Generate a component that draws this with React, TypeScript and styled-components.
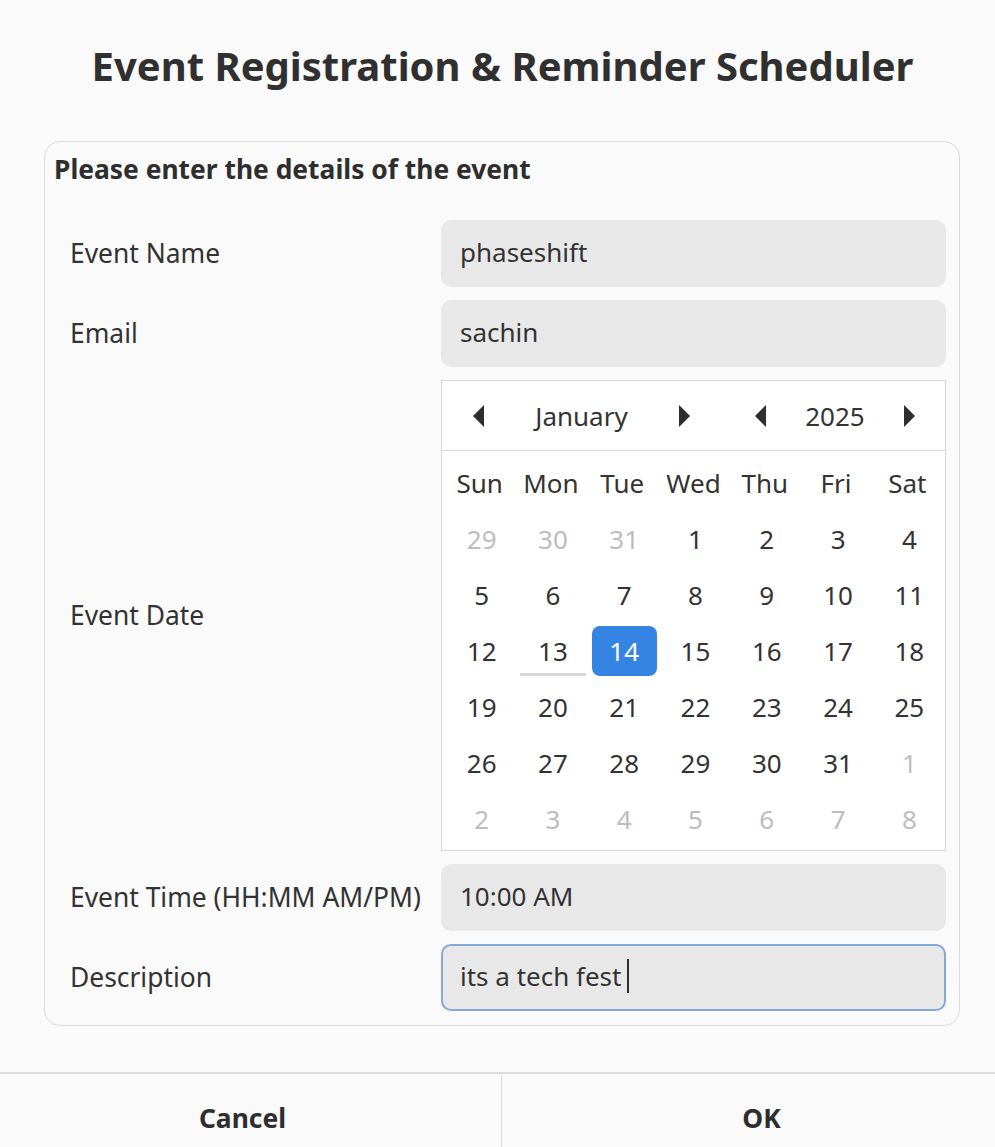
import * as React from 'react';
import styled, { createGlobalStyle } from 'styled-components';

const GlobalStyle = createGlobalStyle`
  html, body {
    margin: 0;
    padding: 0;
    background: #fafafa;
  }
  body {
    font-family: 'Noto Sans', 'Open Sans', sans-serif;
    color: #2e2e2e;
  }
`;

const Dialog = styled.div`
  width: 995px;
  height: 1147px;
  display: flex;
  flex-direction: column;
  background: #fafafa;
  overflow: hidden;
`;

const Title = styled.h1`
  margin: 0;
  height: 132px;
  display: flex;
  align-items: center;
  justify-content: center;
  padding: 0 0 2px 10px;
  box-sizing: border-box;
  font-size: 40px;
  font-weight: 700;
  color: #303030;
`;

const Frame = styled.section`
  margin: 9px 35px 0 44px;
  border: 1px solid #dadada;
  border-radius: 16px;
  padding: 8px 13px 14px 9px;
`;

const FrameHeading = styled.div`
  font-size: 26.4px;
  font-weight: 700;
  line-height: 38px;
  color: #2e2e2e;
`;

const FormGrid = styled.div`
  display: grid;
  grid-template-columns: 371px 505px;
  row-gap: 13px;
  margin: 32px 0 0 16px;
`;

const Label = styled.div`
  display: flex;
  align-items: center;
  padding-bottom: 2px;
  font-size: 26.4px;
  color: #333;
`;

const Entry = styled.div<{ $focused?: boolean }>`
  height: 67px;
  box-sizing: border-box;
  display: flex;
  align-items: center;
  padding-left: ${p => (p.$focused ? '17px' : '19px')};
  padding-bottom: 3px;
  border-radius: 10px;
  background: #e8e8e8;
  border: ${p => (p.$focused ? '2px solid #83a8db' : 'none')};
  font-size: 26px;
  color: #333;
`;

const Caret = styled.span`
  display: inline-block;
  width: 2px;
  height: 34px;
  margin-left: 6px;
  background: #2e2e2e;
`;

const Calendar = styled.div`
  box-sizing: border-box;
  height: 471px;
  padding-bottom: 3px;
  border: 1px solid #d6d6d6;
  background: #ffffff;
`;

const CalendarHeader = styled.div`
  height: 69px;
  display: flex;
  align-items: center;
  justify-content: space-between;
  padding: 0 17px 0 18px;
  border-bottom: 1px solid #dcdcdc;
`;

const Spinner = styled.div`
  display: flex;
  align-items: center;
`;

const ArrowButton = styled.div`
  width: 36px;
  height: 40px;
  display: flex;
  align-items: center;
  justify-content: center;
`;

const SpinnerText = styled.div<{ $width: number }>`
  width: ${p => p.$width}px;
  text-align: center;
  font-size: 26px;
  color: #333;
`;

const DayGrid = styled.div`
  display: grid;
  grid-template-columns: repeat(7, 1fr);
  grid-template-rows: 60px;
  grid-auto-rows: 56px;
  padding: 0 2px;
`;

const DayName = styled.div`
  display: flex;
  align-items: center;
  justify-content: center;
  padding-top: 3px;
  box-sizing: border-box;
  font-size: 26px;
  color: #333;
`;

const DayCell = styled.div<{ $muted?: boolean; $selected?: boolean; $today?: boolean }>`
  margin: 3px 1px 3px 5px;
  display: flex;
  align-items: center;
  justify-content: center;
  font-size: 26px;
  color: ${p => (p.$selected ? '#ffffff' : p.$muted ? '#bdbdbd' : '#333')};
  background: ${p => (p.$selected ? '#3584e4' : 'transparent')};
  box-shadow: ${p => (p.$today ? 'inset 0 -3px 0 #d8d8d8' : 'none')};
  border-radius: ${p => (p.$today ? '0' : '8px')};
`;

const ButtonBar = styled.div`
  margin-top: auto;
  height: 73px;
  display: grid;
  grid-template-columns: 502px 1fr;
  border-top: 2px solid #dcdcdc;
`;

const DialogButton = styled.div<{ $divider?: boolean }>`
  display: flex;
  align-items: center;
  justify-content: center;
  padding-top: 14px;
  padding-right: ${p => (p.$divider ? '16px' : '0')};
  padding-left: ${p => (p.$divider ? '0' : '26px')};
  font-size: 26.4px;
  font-weight: 700;
  color: #2e2e2e;
  border-right: ${p => (p.$divider ? '1px solid #dcdcdc' : 'none')};
`;

const Triangle: React.FC<{ dir: 'left' | 'right' }> = ({ dir }) => (
  <svg width="12" height="22" viewBox="0 0 12 22">
    {dir === 'left' ? (
      <polygon points="12,0 12,22 1,11" fill="#2e2e2e" />
    ) : (
      <polygon points="0,0 0,22 11,11" fill="#2e2e2e" />
    )}
  </svg>
);

const dayNames = ['Sun', 'Mon', 'Tue', 'Wed', 'Thu', 'Fri', 'Sat'];

interface IDay {
  n: number;
  muted: boolean;
}

function buildDays(): IDay[] {
  const days: IDay[] = [];
  [29, 30, 31].forEach(n => days.push({ n, muted: true }));
  for (let n = 1; n <= 31; n++) {
    days.push({ n, muted: false });
  }
  for (let n = 1; days.length < 42; n++) {
    days.push({ n, muted: true });
  }
  return days;
}

const App: React.FC = () => {
  const days = buildDays();

  return (
    <Dialog>
      <GlobalStyle />
      <Title>Event Registration &amp; Reminder Scheduler</Title>
      <Frame>
        <FrameHeading>Please enter the details of the event</FrameHeading>
        <FormGrid>
          <Label>Event Name</Label>
          <Entry>phaseshift</Entry>

          <Label>Email</Label>
          <Entry>sachin</Entry>

          <Label>Event Date</Label>
          <Calendar>
            <CalendarHeader>
              <Spinner>
                <ArrowButton><Triangle dir="left" /></ArrowButton>
                <SpinnerText $width={171}>January</SpinnerText>
                <ArrowButton><Triangle dir="right" /></ArrowButton>
              </Spinner>
              <Spinner>
                <ArrowButton><Triangle dir="left" /></ArrowButton>
                <SpinnerText $width={114}>2025</SpinnerText>
                <ArrowButton><Triangle dir="right" /></ArrowButton>
              </Spinner>
            </CalendarHeader>
            <DayGrid>
              {dayNames.map(d => (
                <DayName key={d}>{d}</DayName>
              ))}
              {days.map((d, i) => (
                <DayCell
                  key={`day-${i}`}
                  $muted={d.muted}
                  $selected={!d.muted && d.n === 14}
                  $today={!d.muted && d.n === 13}
                >
                  {d.n}
                </DayCell>
              ))}
            </DayGrid>
          </Calendar>

          <Label>Event Time (HH:MM AM/PM)</Label>
          <Entry>10:00 AM</Entry>

          <Label>Description</Label>
          <Entry $focused>
            its a tech fest<Caret />
          </Entry>
        </FormGrid>
      </Frame>
      <ButtonBar>
        <DialogButton $divider>Cancel</DialogButton>
        <DialogButton>OK</DialogButton>
      </ButtonBar>
    </Dialog>
  );
};

export default App;
